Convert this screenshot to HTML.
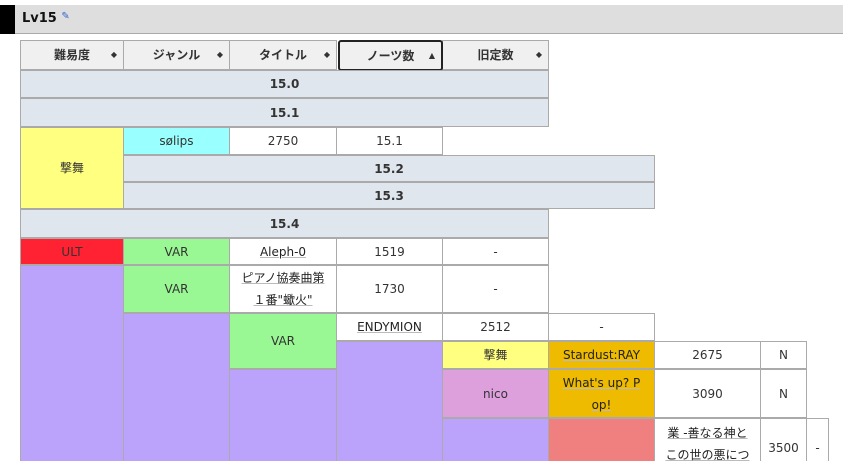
<html><head><style>
html,body{margin:0;width:843px;height:461px;overflow:hidden}
body{background:#fff;font-family:"DejaVu Sans","Noto Sans CJK JP",sans-serif;font-size:12px;color:#333;position:relative}
.c{position:absolute;box-sizing:border-box;border:1px solid #aaa;display:flex;align-items:center;justify-content:center;text-align:center;line-height:26px;margin:-1px 0 0 -1px;white-space:nowrap}
.h{background:#f0f0f0;font-weight:bold}
.g{background:#e0e6ee;font-weight:bold}
.u{text-decoration:underline;text-decoration-color:#bbb;color:#222}
.p{background:#bba3fb;border-bottom:none}
.ar{position:absolute;right:6px;font-size:8px;color:#333}
</style></head><body>
<div style="position:absolute;left:0;top:5px;width:843px;height:28px;background:#dedede;border-bottom:1px solid #aaa"></div>
<div style="position:absolute;left:0;top:5px;width:15px;height:29px;background:#000"></div>
<div style="position:absolute;left:22px;top:11px;font-weight:bold;font-size:13px;color:#111">Lv15 <span style="font-size:10px;color:#36c;vertical-align:top">✎</span></div>

<div class="c h" style="left:21px;top:41px;width:104px;height:30px">難易度<span class="ar">◆</span></div>
<div class="c h" style="left:124px;top:41px;width:107px;height:30px">ジャンル<span class="ar">◆</span></div>
<div class="c h" style="left:230px;top:41px;width:108px;height:30px">タイトル<span class="ar">◆</span></div>
<div class="c h" style="left:443px;top:41px;width:107px;height:30px">旧定数<span class="ar">◆</span></div>
<div class="c h" style="left:338px;top:40px;width:105px;height:31px;border:2px solid #222;border-radius:3px;margin:0">ノーツ数<span class="ar">▲</span></div>

<div class="c g" style="left:21px;top:71px;width:529px;height:28px">15.0</div>
<div class="c g" style="left:21px;top:99px;width:529px;height:29px">15.1</div>
<div class="c" style="left:21px;top:128px;width:104px;height:82px;background:#ffff80">撃舞</div>
<div class="c" style="left:124px;top:128px;width:107px;height:28px;background:#99ffff">sølips</div>
<div class="c" style="left:230px;top:128px;width:108px;height:28px">2750</div>
<div class="c" style="left:337px;top:128px;width:107px;height:28px">15.1</div>
<div class="c g" style="left:124px;top:156px;width:532px;height:27px">15.2</div>
<div class="c g" style="left:124px;top:183px;width:532px;height:27px">15.3</div>
<div class="c g" style="left:21px;top:210px;width:529px;height:29px">15.4</div>

<div class="c" style="left:21px;top:239px;width:104px;height:27px;background:#ff2233">ULT</div>
<div class="c" style="left:124px;top:239px;width:107px;height:27px;background:#99f893">VAR</div>
<div class="c" style="left:230px;top:239px;width:108px;height:27px"><span class="u">Aleph-0</span></div>
<div class="c" style="left:337px;top:239px;width:107px;height:27px">1519</div>
<div class="c" style="left:443px;top:239px;width:107px;height:27px">-</div>

<div class="c p" style="left:21px;top:266px;width:104px;height:196px"></div>
<div class="c" style="left:124px;top:266px;width:107px;height:48px;background:#99f893">VAR</div>
<div class="c" style="left:230px;top:266px;width:108px;height:48px;line-height:22px"><span class="u">ピアノ協奏曲第<br>１番"蠍火"</span></div>
<div class="c" style="left:337px;top:266px;width:107px;height:48px">1730</div>
<div class="c" style="left:443px;top:266px;width:107px;height:48px">-</div>

<div class="c p" style="left:124px;top:314px;width:107px;height:148px"></div>
<div class="c" style="left:230px;top:314px;width:108px;height:56px;background:#99f893">VAR</div>
<div class="c" style="left:337px;top:314px;width:107px;height:28px"><span class="u">ENDYMION</span></div>
<div class="c" style="left:443px;top:314px;width:107px;height:28px">2512</div>
<div class="c" style="left:549px;top:314px;width:107px;height:28px">-</div>

<div class="c p" style="left:337px;top:342px;width:107px;height:120px"></div>
<div class="c" style="left:443px;top:342px;width:107px;height:28px;background:#ffff80">撃舞</div>
<div class="c" style="left:549px;top:342px;width:107px;height:28px;background:#eebb00"><span class="u">Stardust:RAY</span></div>
<div class="c" style="left:655px;top:342px;width:107px;height:28px">2675</div>
<div class="c" style="left:761px;top:342px;width:47px;height:28px">N</div>

<div class="c p" style="left:230px;top:370px;width:108px;height:92px"></div>
<div class="c" style="left:443px;top:370px;width:107px;height:49px;background:#dda0dd">nico</div>
<div class="c" style="left:549px;top:370px;width:107px;height:49px;background:#eebb00;line-height:22px;white-space:normal"><span class="u">What's up? P<br>op!</span></div>
<div class="c" style="left:655px;top:370px;width:107px;height:49px">3090</div>
<div class="c" style="left:761px;top:370px;width:47px;height:49px">N</div>

<div class="c p" style="left:443px;top:419px;width:107px;height:43px"></div>
<div class="c" style="left:549px;top:419px;width:107px;height:43px;background:#f08080;border-bottom:none"></div>
<div class="c" style="left:655px;top:419px;width:107px;height:43px;line-height:22px;align-items:flex-start;padding-top:3px;border-bottom:none;overflow:hidden"><span class="u">業 -善なる神と<br>この世の悪につ</span></div>
<div class="c" style="left:761px;top:419px;width:47px;height:43px;align-items:flex-start;padding-top:19px;border-bottom:none;line-height:20px">3500</div>
<div class="c" style="left:807px;top:419px;width:23px;height:43px;align-items:flex-start;padding-top:19px;border-bottom:none;line-height:20px">-</div>
</body></html>
